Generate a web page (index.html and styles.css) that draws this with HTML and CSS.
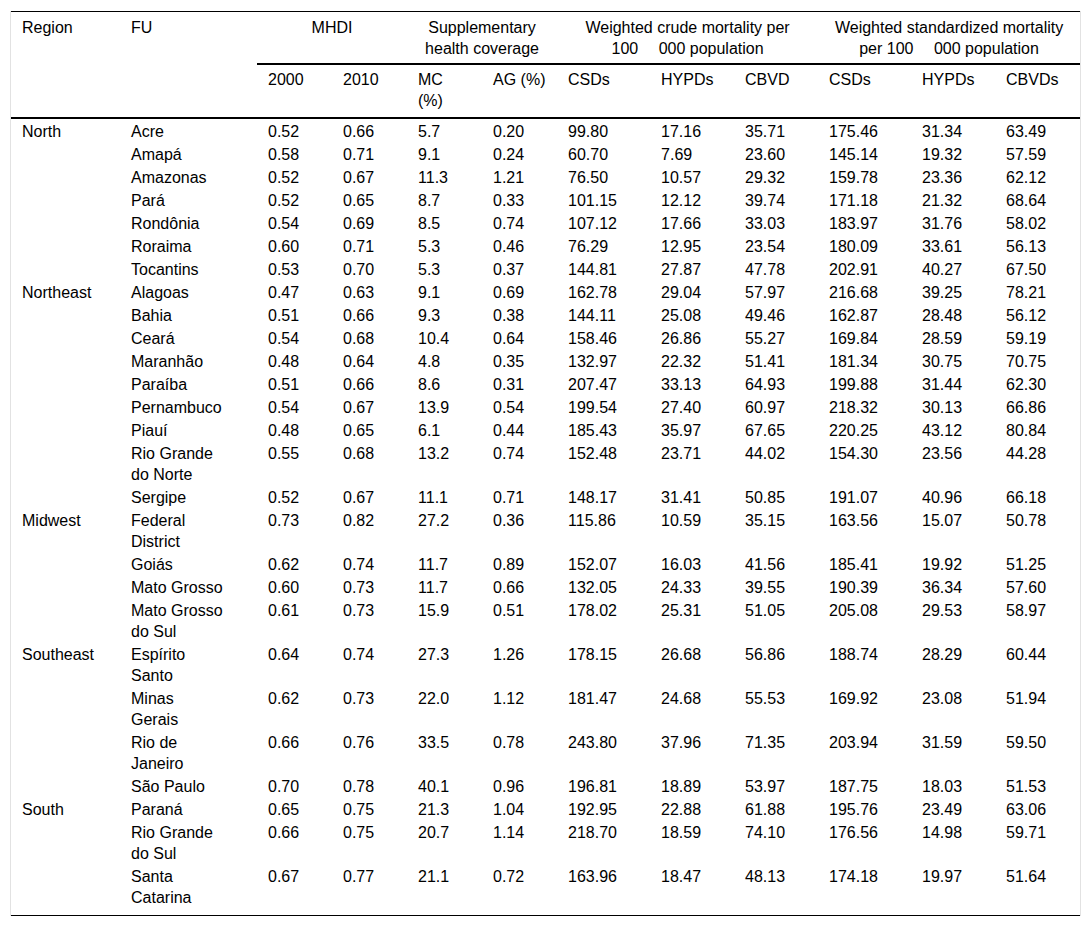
FILE: index.html
```html
<!DOCTYPE html>
<html lang="en">
<head>
<meta charset="utf-8">
<title>Mortality by Federative Unit</title>
<link rel="stylesheet" href="styles.css">
</head>
<body>
<div class="wrap">
<table class="data">
<colgroup>
<col class="c-region"><col class="c-fu"><col class="c-75"><col class="c-75"><col class="c-75"><col class="c-75">
<col class="c-93"><col class="c-84"><col class="c-84"><col class="c-93"><col class="c-84"><col class="c-85">
</colgroup>
<thead>
<tr>
<th rowspan="2" class="lead">Region</th>
<th rowspan="2" class="lead fu">FU</th>
<th colspan="2" class="group">MHDI</th>
<th colspan="2" class="group">Supplementary<br>health coverage</th>
<th colspan="3" class="group">Weighted crude mortality per<br>100&emsp;&nbsp;000 population</th>
<th colspan="3" class="group">Weighted standardized mortality<br>per 100&emsp;&nbsp;000 population</th>
</tr>
<tr class="sub">
<th>2000</th><th>2010</th><th>MC<br>(%)</th><th>AG (%)</th>
<th>CSDs</th><th>HYPDs</th><th>CBVD</th><th>CSDs</th><th>HYPDs</th><th>CBVDs</th>
</tr>
</thead>
<tbody>
<tr class="first"><td>North</td><td class="fu">Acre</td><td>0.52</td><td>0.66</td><td>5.7</td><td>0.20</td><td>99.80</td><td>17.16</td><td>35.71</td><td>175.46</td><td>31.34</td><td>63.49</td></tr>
<tr><td></td><td class="fu">Amapá</td><td>0.58</td><td>0.71</td><td>9.1</td><td>0.24</td><td>60.70</td><td>7.69</td><td>23.60</td><td>145.14</td><td>19.32</td><td>57.59</td></tr>
<tr><td></td><td class="fu">Amazonas</td><td>0.52</td><td>0.67</td><td>11.3</td><td>1.21</td><td>76.50</td><td>10.57</td><td>29.32</td><td>159.78</td><td>23.36</td><td>62.12</td></tr>
<tr><td></td><td class="fu">Pará</td><td>0.52</td><td>0.65</td><td>8.7</td><td>0.33</td><td>101.15</td><td>12.12</td><td>39.74</td><td>171.18</td><td>21.32</td><td>68.64</td></tr>
<tr><td></td><td class="fu">Rondônia</td><td>0.54</td><td>0.69</td><td>8.5</td><td>0.74</td><td>107.12</td><td>17.66</td><td>33.03</td><td>183.97</td><td>31.76</td><td>58.02</td></tr>
<tr><td></td><td class="fu">Roraima</td><td>0.60</td><td>0.71</td><td>5.3</td><td>0.46</td><td>76.29</td><td>12.95</td><td>23.54</td><td>180.09</td><td>33.61</td><td>56.13</td></tr>
<tr><td></td><td class="fu">Tocantins</td><td>0.53</td><td>0.70</td><td>5.3</td><td>0.37</td><td>144.81</td><td>27.87</td><td>47.78</td><td>202.91</td><td>40.27</td><td>67.50</td></tr>
<tr><td>Northeast</td><td class="fu">Alagoas</td><td>0.47</td><td>0.63</td><td>9.1</td><td>0.69</td><td>162.78</td><td>29.04</td><td>57.97</td><td>216.68</td><td>39.25</td><td>78.21</td></tr>
<tr><td></td><td class="fu">Bahia</td><td>0.51</td><td>0.66</td><td>9.3</td><td>0.38</td><td>144.11</td><td>25.08</td><td>49.46</td><td>162.87</td><td>28.48</td><td>56.12</td></tr>
<tr><td></td><td class="fu">Ceará</td><td>0.54</td><td>0.68</td><td>10.4</td><td>0.64</td><td>158.46</td><td>26.86</td><td>55.27</td><td>169.84</td><td>28.59</td><td>59.19</td></tr>
<tr><td></td><td class="fu">Maranhão</td><td>0.48</td><td>0.64</td><td>4.8</td><td>0.35</td><td>132.97</td><td>22.32</td><td>51.41</td><td>181.34</td><td>30.75</td><td>70.75</td></tr>
<tr><td></td><td class="fu">Paraíba</td><td>0.51</td><td>0.66</td><td>8.6</td><td>0.31</td><td>207.47</td><td>33.13</td><td>64.93</td><td>199.88</td><td>31.44</td><td>62.30</td></tr>
<tr><td></td><td class="fu">Pernambuco</td><td>0.54</td><td>0.67</td><td>13.9</td><td>0.54</td><td>199.54</td><td>27.40</td><td>60.97</td><td>218.32</td><td>30.13</td><td>66.86</td></tr>
<tr><td></td><td class="fu">Piauí</td><td>0.48</td><td>0.65</td><td>6.1</td><td>0.44</td><td>185.43</td><td>35.97</td><td>67.65</td><td>220.25</td><td>43.12</td><td>80.84</td></tr>
<tr><td></td><td class="fu">Rio Grande do Norte</td><td>0.55</td><td>0.68</td><td>13.2</td><td>0.74</td><td>152.48</td><td>23.71</td><td>44.02</td><td>154.30</td><td>23.56</td><td>44.28</td></tr>
<tr><td></td><td class="fu">Sergipe</td><td>0.52</td><td>0.67</td><td>11.1</td><td>0.71</td><td>148.17</td><td>31.41</td><td>50.85</td><td>191.07</td><td>40.96</td><td>66.18</td></tr>
<tr><td>Midwest</td><td class="fu">Federal District</td><td>0.73</td><td>0.82</td><td>27.2</td><td>0.36</td><td>115.86</td><td>10.59</td><td>35.15</td><td>163.56</td><td>15.07</td><td>50.78</td></tr>
<tr><td></td><td class="fu">Goiás</td><td>0.62</td><td>0.74</td><td>11.7</td><td>0.89</td><td>152.07</td><td>16.03</td><td>41.56</td><td>185.41</td><td>19.92</td><td>51.25</td></tr>
<tr><td></td><td class="fu">Mato Grosso</td><td>0.60</td><td>0.73</td><td>11.7</td><td>0.66</td><td>132.05</td><td>24.33</td><td>39.55</td><td>190.39</td><td>36.34</td><td>57.60</td></tr>
<tr><td></td><td class="fu">Mato Grosso do Sul</td><td>0.61</td><td>0.73</td><td>15.9</td><td>0.51</td><td>178.02</td><td>25.31</td><td>51.05</td><td>205.08</td><td>29.53</td><td>58.97</td></tr>
<tr><td>Southeast</td><td class="fu">Espírito Santo</td><td>0.64</td><td>0.74</td><td>27.3</td><td>1.26</td><td>178.15</td><td>26.68</td><td>56.86</td><td>188.74</td><td>28.29</td><td>60.44</td></tr>
<tr><td></td><td class="fu">Minas Gerais</td><td>0.62</td><td>0.73</td><td>22.0</td><td>1.12</td><td>181.47</td><td>24.68</td><td>55.53</td><td>169.92</td><td>23.08</td><td>51.94</td></tr>
<tr><td></td><td class="fu">Rio de Janeiro</td><td>0.66</td><td>0.76</td><td>33.5</td><td>0.78</td><td>243.80</td><td>37.96</td><td>71.35</td><td>203.94</td><td>31.59</td><td>59.50</td></tr>
<tr><td></td><td class="fu">São Paulo</td><td>0.70</td><td>0.78</td><td>40.1</td><td>0.96</td><td>196.81</td><td>18.89</td><td>53.97</td><td>187.75</td><td>18.03</td><td>51.53</td></tr>
<tr><td>South</td><td class="fu">Paraná</td><td>0.65</td><td>0.75</td><td>21.3</td><td>1.04</td><td>192.95</td><td>22.88</td><td>61.88</td><td>195.76</td><td>23.49</td><td>63.06</td></tr>
<tr><td></td><td class="fu">Rio Grande do Sul</td><td>0.66</td><td>0.75</td><td>20.7</td><td>1.14</td><td>218.70</td><td>18.59</td><td>74.10</td><td>176.56</td><td>14.98</td><td>59.71</td></tr>
<tr class="last"><td></td><td class="fu">Santa Catarina</td><td>0.67</td><td>0.77</td><td>21.1</td><td>0.72</td><td>163.96</td><td>18.47</td><td>48.13</td><td>174.18</td><td>19.97</td><td>51.64</td></tr>
</tbody>
</table>
</div>
</body>
</html>
```

FILE: styles.css
```css
html, body {
  margin: 0;
  padding: 0;
  background: #ffffff;
}

body {
  font-family: "Liberation Sans", Arial, sans-serif;
  font-size: 16px;
  line-height: 21px;
  color: #000000;
}

.wrap {
  width: 1069px;
  margin: 11px 0 0 10px;
  border-left: 1px solid #e2e2e2;
  border-right: 1px solid #e2e2e2;
}

.data {
  width: 1069px;
  table-layout: fixed;
  border-collapse: separate;
  border-spacing: 0;
  border-top: 1px solid #000000;
  border-bottom: 1px solid #000000;
}

.c-region { width: 109px; }
.c-fu { width: 137px; }
.c-75 { width: 75px; }
.c-93 { width: 93px; }
.c-84 { width: 84px; }
.c-85 { width: 85px; }

.data th {
  font-weight: normal;
  text-align: left;
  vertical-align: top;
  padding: 5px 11px 4px 11px;
}

.data th.group {
  text-align: center;
  white-space: nowrap;
  border-bottom: 2px solid #000000;
}

.data th.lead {
  border-bottom: 2px solid #000000;
}

.data tr.sub th {
  padding: 4px 11px 6px 11px;
  border-bottom: 2px solid #000000;
}

.data td {
  text-align: left;
  vertical-align: top;
  padding: 1px 11px;
}

.data .fu {
  padding-right: 34px;
}

.data tr.first td {
  padding-top: 2px;
}

.data tr.last td {
  padding-bottom: 7px;
}
```
